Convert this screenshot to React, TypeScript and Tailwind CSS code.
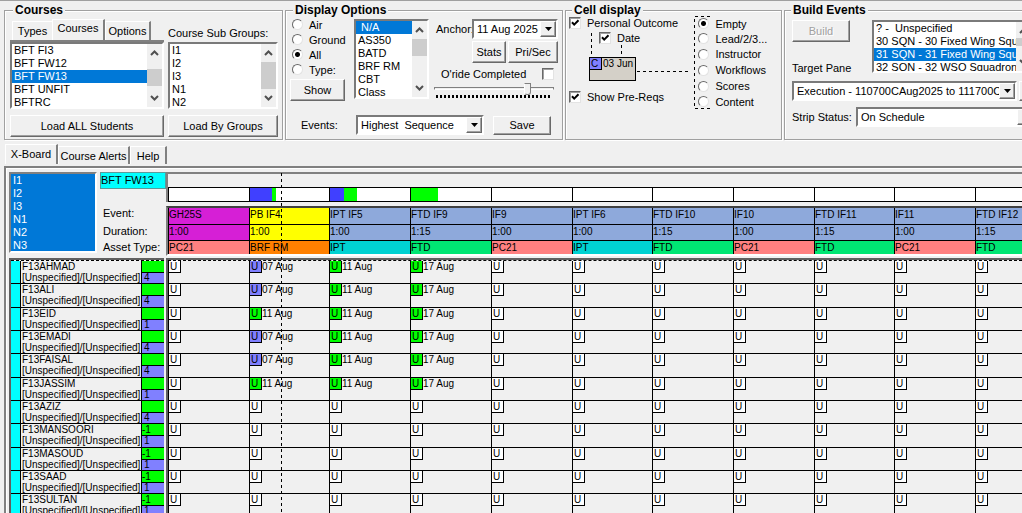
import React from "react";

const raised =
  "border border-white border-r-[#696969] border-b-[#696969] bg-[#f0f0f0] shadow-[inset_-1px_-1px_0_#a0a0a0]";
const sunken =
  "border-2 border-t-[#7a7a7a] border-l-[#7a7a7a] border-r-white border-b-white bg-white";

function Group({ title, className, children }: { title: string; className: string; children: React.ReactNode }) {
  return (
    <fieldset className={`min-w-0 shrink-0 border border-[#a0a0a0] pb-[2px] shadow-[1px_1px_0_#fff,inset_1px_1px_0_#fff] ${className}`}>
      <legend className="-mb-px ml-[3px] bg-[#f0f0f0] px-[2px] text-[12px] leading-[14px] font-bold">{title}</legend>
      {children}
    </fieldset>
  );
}

function PushButton({
  children,
  className = "",
  disabled = false,
  label,
}: {
  children?: React.ReactNode;
  className?: string;
  disabled?: boolean;
  label?: string;
}) {
  return (
    <button
      type="button"
      disabled={disabled}
      aria-label={label}
      className={`${raised} text-center whitespace-nowrap disabled:text-[#a0a0a0] disabled:[text-shadow:1px_1px_0_#fff] ${className}`}
    >
      {children}
    </button>
  );
}

function Chevron({ up = false }: { up?: boolean }) {
  return (
    <svg viewBox="0 0 9 6" className="h-[6px] w-[9px]" fill="none" stroke="#505050" strokeWidth="2">
      <path d={up ? "M1 5L4.5 1.5L8 5" : "M1 1L4.5 4.5L8 1"} />
    </svg>
  );
}

function ListBox({
  label,
  options,
  selected = [],
  className,
  thumb,
}: {
  label: string;
  options: string[];
  selected?: string[];
  className: string;
  thumb?: string;
}) {
  return (
    <div className={`flex overflow-hidden ${sunken} ${className}`}>
      <select
        multiple
        aria-label={label}
        defaultValue={selected}
        className="h-full min-w-0 flex-1 appearance-none overflow-hidden rounded-none bg-white p-0 outline-none"
      >
        {options.map((o) => (
          <option
            key={o}
            value={o}
            className="h-[13px] min-h-0 py-0 pr-0 pl-[2px] text-[11px] leading-[13px] checked:bg-[linear-gradient(#0078d7,#0078d7)] checked:[-webkit-text-fill-color:#fff]"
          >
            {o}
          </option>
        ))}
      </select>
      {thumb && (
        <div aria-hidden="true" className="flex w-[15px] shrink-0 flex-col items-center bg-[#f0f0f0] py-[6px]">
          <Chevron up />
          <div className="flex w-full flex-1 flex-col">
            <div className={`w-full bg-[#cdcdcd] ${thumb}`} />
          </div>
          <Chevron />
        </div>
      )}
    </div>
  );
}

function Combo({ label, id, value, className }: { label?: string; id?: string; value: string; className: string }) {
  return (
    <div className={`relative h-5 ${sunken} ${className}`}>
      <select id={id} aria-label={label} className="block h-4 w-full appearance-none rounded-none bg-white pr-[16px] pl-[3px] leading-4 outline-none">
        <option>{value}</option>
      </select>
      <span aria-hidden="true" className={`pointer-events-none absolute inset-y-0 right-0 flex w-[16px] items-center justify-center ${raised}`}>
        <svg viewBox="0 0 7 4" className="h-[4px] w-[7px]">
          <path d="M0 0H7L3.5 4Z" />
        </svg>
      </span>
    </div>
  );
}

function Radio({ name, label, checked = false, className }: { name: string; label: string; checked?: boolean; className: string }) {
  return (
    <label className={`flex items-center gap-[6px] ${className}`}>
      <input
        type="radio"
        name={name}
        defaultChecked={checked}
        className="h-[11px] w-[11px] shrink-0 appearance-none rounded-full border border-[#e3e3e3] border-t-[#696969] border-l-[#696969] bg-white checked:bg-[radial-gradient(circle,#000_2px,#fff_3px)]"
      />
      {label}
    </label>
  );
}

function Check({ label, checked = false }: { label: string; checked?: boolean }) {
  return (
    <label className="flex h-[13px] items-center gap-[6px] whitespace-nowrap">
      <span className="relative block h-3 w-3 shrink-0">
        <input
          type="checkbox"
          defaultChecked={checked}
          className="peer block h-3 w-3 appearance-none border border-[#e3e3e3] border-t-[#696969] border-l-[#696969] bg-white shadow-[inset_1px_1px_0_#a0a0a0]"
        />
        <svg viewBox="0 0 12 12" className="pointer-events-none absolute inset-0 hidden h-3 w-3 peer-checked:block" fill="none" stroke="#000" strokeWidth="2">
          <path d="M3 5.2L5.2 7.6L9.5 3.2" />
        </svg>
      </span>
      {label}
    </label>
  );
}

const tab = "border-t border-l border-t-white border-l-white border-r-2 border-r-[#808080] bg-[#f0f0f0] text-center whitespace-nowrap";

function CoursesGroup() {
  return (
    <Group title="Courses" className="w-[279px] px-[5px]">
      <div className="grid grid-cols-[154px_110px] gap-x-1 pt-[3px]">
        <div role="tablist" className="flex h-[23px] items-end border-b-2 border-[#808080] pl-[2px]">
          <button type="button" role="tab" className="h-[19px] w-[40px] border-t border-l border-white">Types</button>
          <button type="button" role="tab" aria-selected="true" className={`h-[21px] w-[53px] pb-1 ${tab}`}>Courses</button>
          <button type="button" role="tab" className={`h-[19px] w-[46px] ${tab}`}>Options</button>
        </div>
        <div className="pt-[7px] leading-[14px] whitespace-nowrap">Course Sub Groups:</div>
        <ListBox label="Courses" options={["BFT FI3", "BFT FW12", "BFT FW13", "BFT UNFIT", "BFTRC"]} selected={["BFT FW13"]} className="h-[67px]" thumb="mt-[13px] h-[17px]" />
        <ListBox label="Course Sub Groups" options={["I1", "I2", "I3", "N1", "N2"]} className="h-[67px]" thumb="mt-[6px] h-[27px]" />
        <PushButton className="mt-[6px] h-[22px]">Load ALL Students</PushButton>
        <PushButton className="mt-[6px] h-[22px]">Load By Groups</PushButton>
      </div>
    </Group>
  );
}

function DisplayGroup() {
  return (
    <Group title="Display Options" className="w-[278px] px-1">
      <div className="flex h-[99px]">
        <div className="w-[64px] pt-px">
          <Radio name="kind" label="Air" className="h-[15px] pl-[2px]" />
          <Radio name="kind" label="Ground" className="h-[15px] pl-[2px]" />
          <Radio name="kind" label="All" checked className="h-[15px] pl-[2px]" />
          <Radio name="kind" label="Type:" className="h-[15px] pl-[2px]" />
          <PushButton className="mt-[2px] h-[22px] w-[55px]">Show</PushButton>
        </div>
        <ListBox
          label="Asset type"
          options={["\u00a0N/A", "AS350", "BATD", "BRF RM", "CBT", "Class"]}
          selected={["\u00a0N/A"]}
          className="mt-[3px] h-[80px] w-[75px]"
          thumb="mt-[6px] h-[17px]"
        />
        <div className="ml-[5px] flex-1 pt-[3px]">
          <div className="flex items-center">
            <label htmlFor="anchor" className="w-[38px] pl-[2px]">Anchor:</label>
            <Combo id="anchor" value="11 Aug 2025" className="w-[86px]" />
          </div>
          <div className="mt-[2px] flex gap-[2px] pl-[38px]">
            <PushButton className="h-[22px] w-[34px]">Stats</PushButton>
            <PushButton className="h-[22px] w-[50px]">Pri/Sec</PushButton>
          </div>
          <label className="mt-1 flex h-[14px] items-center justify-between pr-1 pl-[7px]">
            O'ride Completed
            <input type="checkbox" className="h-3 w-3 appearance-none border border-[#e3e3e3] border-t-[#696969] border-l-[#696969] bg-white shadow-[inset_1px_1px_0_#a0a0a0]" />
          </label>
          <input
            type="range"
            aria-label="Completed range"
            defaultValue={80}
            className="block h-[14px] w-[120px] appearance-none bg-transparent [&::-webkit-slider-runnable-track]:h-[3px] [&::-webkit-slider-runnable-track]:border [&::-webkit-slider-runnable-track]:border-[#808080] [&::-webkit-slider-runnable-track]:border-b-white [&::-webkit-slider-thumb]:-mt-[5px] [&::-webkit-slider-thumb]:h-[12px] [&::-webkit-slider-thumb]:w-[7px] [&::-webkit-slider-thumb]:appearance-none [&::-webkit-slider-thumb]:rounded-b-[3px] [&::-webkit-slider-thumb]:border [&::-webkit-slider-thumb]:border-[#808080] [&::-webkit-slider-thumb]:border-l-white [&::-webkit-slider-thumb]:bg-[#f0f0f0]"
          />
          <div aria-hidden="true" className="ml-[2px] h-[3px] w-[115px] bg-[repeating-linear-gradient(90deg,#000_0_2px,transparent_2px_4px)]" />
        </div>
      </div>
      <div className="flex items-center pl-[11px]">
        <label htmlFor="events" className="w-[55px]">Events:</label>
        <Combo id="events" value={"Highest\u00a0 Sequence"} className="w-[128px]" />
        <PushButton className="ml-[9px] h-[19px] w-[58px]">Save</PushButton>
      </div>
    </Group>
  );
}

function CellGroup() {
  return (
    <Group title="Cell display" className="w-[217px] pr-1 pl-[3px]">
      <div className="flex justify-between">
        <div className="relative w-[126px]">
          <Check label="Personal Outcome" checked />
          <div className="mt-[2px] pl-[30px]">
            <Check label="Date" checked />
          </div>
          <svg className="pointer-events-none absolute top-0 left-0 h-[66px] w-[126px]" fill="none" stroke="#000" strokeDasharray="3 3">
            <path d="M22.5 17V39M52.5 29V39M68 55.5H120" />
          </svg>
          <div className="mt-[13px] ml-[20px] flex h-[24px] w-[47px] border border-black bg-[#d4d0c8] text-[10px] leading-[12px] whitespace-nowrap">
            <span className="h-[12px] w-[12px] shrink-0 border-r border-b border-black bg-[#8080ff] pl-px leading-[11px]">C</span>
            <span className="pl-px">03 Jun</span>
          </div>
          <div className="mt-[9px]">
            <Check label="Show Pre-Reqs" checked />
          </div>
        </div>
        <div className="relative w-[83px] pl-[4px]">
          <svg className="pointer-events-none absolute top-0 left-0 h-[94px] w-4" fill="none" stroke="#000" strokeDasharray="3 3">
            <path d="M16 0.5H0.5V92.5H16" />
          </svg>
          <Radio name="cell" label="Empty" checked className="h-[15px]" />
          <Radio name="cell" label="Lead/2/3..." className="h-[15px]" />
          <Radio name="cell" label="Instructor" className="h-[16px]" />
          <Radio name="cell" label="Workflows" className="h-[16px]" />
          <Radio name="cell" label="Scores" className="h-[16px]" />
          <Radio name="cell" label="Content" className="h-[15px]" />
        </div>
      </div>
    </Group>
  );
}

function BuildGroup() {
  return (
    <Group title="Build Events" className="min-w-[270px] flex-1 pl-[3px]">
      <div className="pl-1">
        <div className="flex h-[61px] gap-[22px] pt-1">
          <div className="w-[58px] whitespace-nowrap">
            <PushButton disabled className="h-[22px] w-[58px]">Build</PushButton>
            <div className="mt-[19px] leading-[14px]">Target Pane</div>
          </div>
          <ListBox
            label="Squadron"
            options={["? - \u00a0Unspecified", "30 SQN - 30 Fixed Wing Squadron", "31 SQN - 31 Fixed Wing Squadron", "32 SQN - 32 WSO Squadron"]}
            selected={["31 SQN - 31 Fixed Wing Squadron"]}
            className="h-[53px] w-[161px]"
            thumb="mt-1 h-2"
          />
        </div>
        <div className="mt-1 flex gap-[2px]">
          <Combo label="Target Pane" value="Execution - 110700CAug2025 to 111700CAug2025" className="w-[225px]" />
          <PushButton label="Pick target pane" className="h-5 w-[20px]" />
        </div>
        <div className="mt-[6px] flex items-center">
          <label htmlFor="strip" className="w-[64px] whitespace-nowrap">Strip Status:</label>
          <Combo id="strip" value="On Schedule" className="w-[179px]" />
        </div>
      </div>
    </Group>
  );
}

const PURPLE = "bg-[#d61fd6]";
const BLUE = "bg-[#8ea9db]";
const assetColours: Record<string, string> = {
  PC21: "bg-[#ff8080]",
  "BRF RM": "bg-[#ff8000]",
  IPT: "bg-[#00d2d2]",
  FTD: "bg-[#00e673]",
};

type Event = { name: string; duration: string; asset: string; colour: string; width: string; blue?: string; green?: string };
const events: Event[] = [
  { name: "GH25S", duration: "1:00", asset: "PC21", colour: PURPLE, width: "w-[81px]" },
  { name: "PB IF4", duration: "1:00", asset: "BRF RM", colour: "bg-[#ffff00]", width: "w-[80px]", blue: "w-[22px]", green: "w-[4px]" },
  { name: "IPT IF5", duration: "1:00", asset: "IPT", colour: BLUE, width: "w-[81px]", blue: "w-[14px]", green: "w-[13px]" },
  { name: "FTD IF9", duration: "1:15", asset: "FTD", colour: BLUE, width: "w-[81px]", green: "w-[27px]" },
  { name: "IF9", duration: "1:00", asset: "PC21", colour: BLUE, width: "w-[81px]" },
  { name: "IPT IF6", duration: "1:00", asset: "IPT", colour: BLUE, width: "w-[80px]" },
  { name: "FTD IF10", duration: "1:15", asset: "FTD", colour: BLUE, width: "w-[81px]" },
  { name: "IF10", duration: "1:00", asset: "PC21", colour: BLUE, width: "w-[81px]" },
  { name: "FTD IF11", duration: "1:15", asset: "FTD", colour: BLUE, width: "w-[80px]" },
  { name: "IF11", duration: "1:00", asset: "PC21", colour: BLUE, width: "w-[81px]" },
  { name: "FTD IF12", duration: "1:15", asset: "FTD", colour: BLUE, width: "w-[81px]" },
];

type Student = { name: string; top?: string; count: string; first?: string };
const students: Student[] = [
  { name: "F13AHMAD", count: "4", first: "07 Aug" },
  { name: "F13ALI", count: "4", first: "07 Aug" },
  { name: "F13EID", count: "1", first: "11 Aug" },
  { name: "F13EMADI", count: "4", first: "07 Aug" },
  { name: "F13FAISAL", count: "4", first: "07 Aug" },
  { name: "F13JASSIM", count: "1", first: "11 Aug" },
  { name: "F13AZIZ", count: "4" },
  { name: "F13MANSOORI", top: "-1", count: "1" },
  { name: "F13MASOUD", top: "-1", count: "1" },
  { name: "F13SAAD", top: "-1", count: "1" },
  { name: "F13SULTAN", top: "-1", count: "1" },
];

const rowHeight = (i: number) => (i % 3 === 1 ? "h-[24px]" : "h-[23px]");

function cellDate(s: Student, col: number) {
  if (!s.first) return undefined;
  return [undefined, s.first, "11 Aug", "17 Aug"][col];
}

function Columns() {
  return (
    <colgroup>
      {events.map((e) => (
        <col key={e.name} className={e.width} />
      ))}
    </colgroup>
  );
}

const grid = "w-[888px] table-fixed border-separate border-spacing-0 text-[10px] whitespace-nowrap";

function Board() {
  return (
    <section className="relative ml-1 grid min-h-0 flex-1 grid-cols-[157px_1fr] grid-rows-[86px_1fr] overflow-hidden border-t-2 border-l-2 border-[#808080] pt-1 pl-[3px] shadow-[inset_1px_1px_0_#fff]">
      <div className="flex">
        <select
          multiple
          aria-label="Selected sub groups"
          defaultValue={["I1", "I2", "I3", "N1", "N2", "N3"]}
          className="h-[81px] w-[88px] shrink-0 appearance-none overflow-hidden rounded-none border-2 border-t-[#808080] border-r-white border-b-white border-l-[#808080] bg-[#0078d7] p-0 outline-none"
        >
          {["I1", "I2", "I3", "N1", "N2", "N3"].map((o) => (
            <option key={o} className="h-[13px] min-h-0 py-0 pr-0 pl-[2px] text-[11px] leading-[13px] checked:bg-[linear-gradient(#0078d7,#0078d7)] checked:[-webkit-text-fill-color:#fff]">
              {o}
            </option>
          ))}
        </select>
        <div className="ml-[3px] flex-1 whitespace-nowrap">
          <div className="h-[17px] border border-[#5a9a9a] bg-[#00ffff] leading-[14px]">BFT FW13</div>
          <div className="mt-4 pl-[3px]">
            <div className="h-[18px] leading-4">Event:</div>
            <div className="h-4 leading-4">Duration:</div>
            <div className="h-4 leading-4">Asset Type:</div>
          </div>
        </div>
      </div>

      <div className="min-w-0 overflow-hidden">
        <div className="h-[30px] overflow-hidden border-t-2 border-l-2 border-[#808080] pt-[13px]">
          <div className="flex w-[888px] border-y border-black">
            {events.map((e) => (
              <div key={e.name} className={`flex h-[13px] shrink-0 border-l border-black bg-white ${e.width}`}>
                {e.blue && <div className={`bg-[#4040ff] ${e.blue}`} />}
                {e.green && <div className={`bg-[#00ff00] ${e.green}`} />}
              </div>
            ))}
          </div>
        </div>
        <div className="mt-1 overflow-hidden border-t-2 border-b-2 border-l-2 border-[#808080] border-t-[#404040] border-b-white">
          <table className={grid}>
            <Columns />
            <tbody>
              <tr className="h-[17px]">
                {events.map((e) => (
                  <th key={e.name} scope="col" className={`border-b border-l border-black p-0 text-left align-top leading-[13px] font-normal ${e.colour}`}>{e.name}</th>
                ))}
              </tr>
              <tr className="h-[16px]">
                {events.map((e) => (
                  <td key={e.name} className={`border-b border-l border-black p-0 align-top leading-[13px] ${e.colour}`}>{e.duration}</td>
                ))}
              </tr>
              <tr className="h-[13px]">
                {events.map((e) => (
                  <td key={e.name} className={`border-l border-black p-0 align-top leading-[13px] ${assetColours[e.asset]}`}>{e.asset}</td>
                ))}
              </tr>
            </tbody>
          </table>
        </div>
      </div>

      <div className="mr-[2px] overflow-hidden border-t-2 border-l-2 border-[#606060]">
        <div className="border-t border-dashed border-black" />
        <table className="w-full table-fixed border-separate border-spacing-0 text-[10px] whitespace-nowrap">
          <colgroup>
            <col className="w-[9px]" />
            <col />
            <col className="w-[23px]" />
          </colgroup>
          <tbody>
            {students.map((s, i) => (
              <tr key={s.name} className={rowHeight(i)}>
                <td className="border-b border-black bg-[#00ffff] p-0" />
                <th scope="row" className="overflow-hidden border-b border-l border-black p-0 pl-px text-left align-top leading-[11px] font-normal">
                  <div>{s.name}</div>
                  <div>[Unspecified]/[Unspecified]</div>
                </th>
                <td className="border-b border-l border-black bg-[#8080ff] p-0 align-top leading-[11px]">
                  <div className="h-[12px] border-b border-black bg-[#00ff00]">{s.top}</div>
                  <div className="h-[10px] pl-[2px] leading-[10px]">{s.count}</div>
                </td>
              </tr>
            ))}
          </tbody>
        </table>
      </div>

      <div className="min-w-0 overflow-hidden border-t-2 border-l-2 border-[#606060]">
        <div className="border-t border-dashed border-black" />
        <table className={grid}>
          <Columns />
          <tbody>
            {students.map((s, i) => (
              <tr key={s.name} className={rowHeight(i)}>
                {events.map((e, col) => {
                  const date = cellDate(s, col);
                  const fill = !date ? "bg-white" : date === "07 Aug" ? "bg-[#8080ff]" : "bg-[#00ff00]";
                  return (
                    <td key={e.name} className="border-b border-l border-black p-0 align-top">
                      <div className="flex leading-[12px]">
                        <span className={`h-[12px] w-[12px] border-r border-b border-black pl-px ${fill}`}>U</span>
                        {date && <span>{date}</span>}
                      </div>
                    </td>
                  );
                })}
              </tr>
            ))}
          </tbody>
        </table>
      </div>

      <div
        aria-hidden="true"
        className="pointer-events-none absolute top-[5px] bottom-0 left-[275px] w-px bg-[repeating-linear-gradient(180deg,#000_0_3px,transparent_3px_6px)]"
      />
    </section>
  );
}

export default function App() {
  return (
    <main className="flex h-screen flex-col overflow-hidden border-t border-[#a0a0a0] bg-[#f0f0f0] font-['Liberation_Sans',Arial,sans-serif] text-[11px] leading-[14px] text-black">
      <div className="flex shrink-0 gap-[2px] overflow-hidden pt-[2px] pb-px pl-1">
        <CoursesGroup />
        <DisplayGroup />
        <CellGroup />
        <BuildGroup />
      </div>
      <div role="tablist" className="flex h-[25px] shrink-0 items-end pb-[2px] pl-[5px]">
        <button type="button" role="tab" aria-selected="true" className={`h-5 w-[53px] pb-[2px] ${tab}`}>X-Board</button>
        <button type="button" role="tab" className={`h-[18px] w-[72px] ${tab}`}>Course Alerts</button>
        <button type="button" role="tab" className={`h-[18px] w-[37px] ${tab}`}>Help</button>
      </div>
      <Board />
    </main>
  );
}
